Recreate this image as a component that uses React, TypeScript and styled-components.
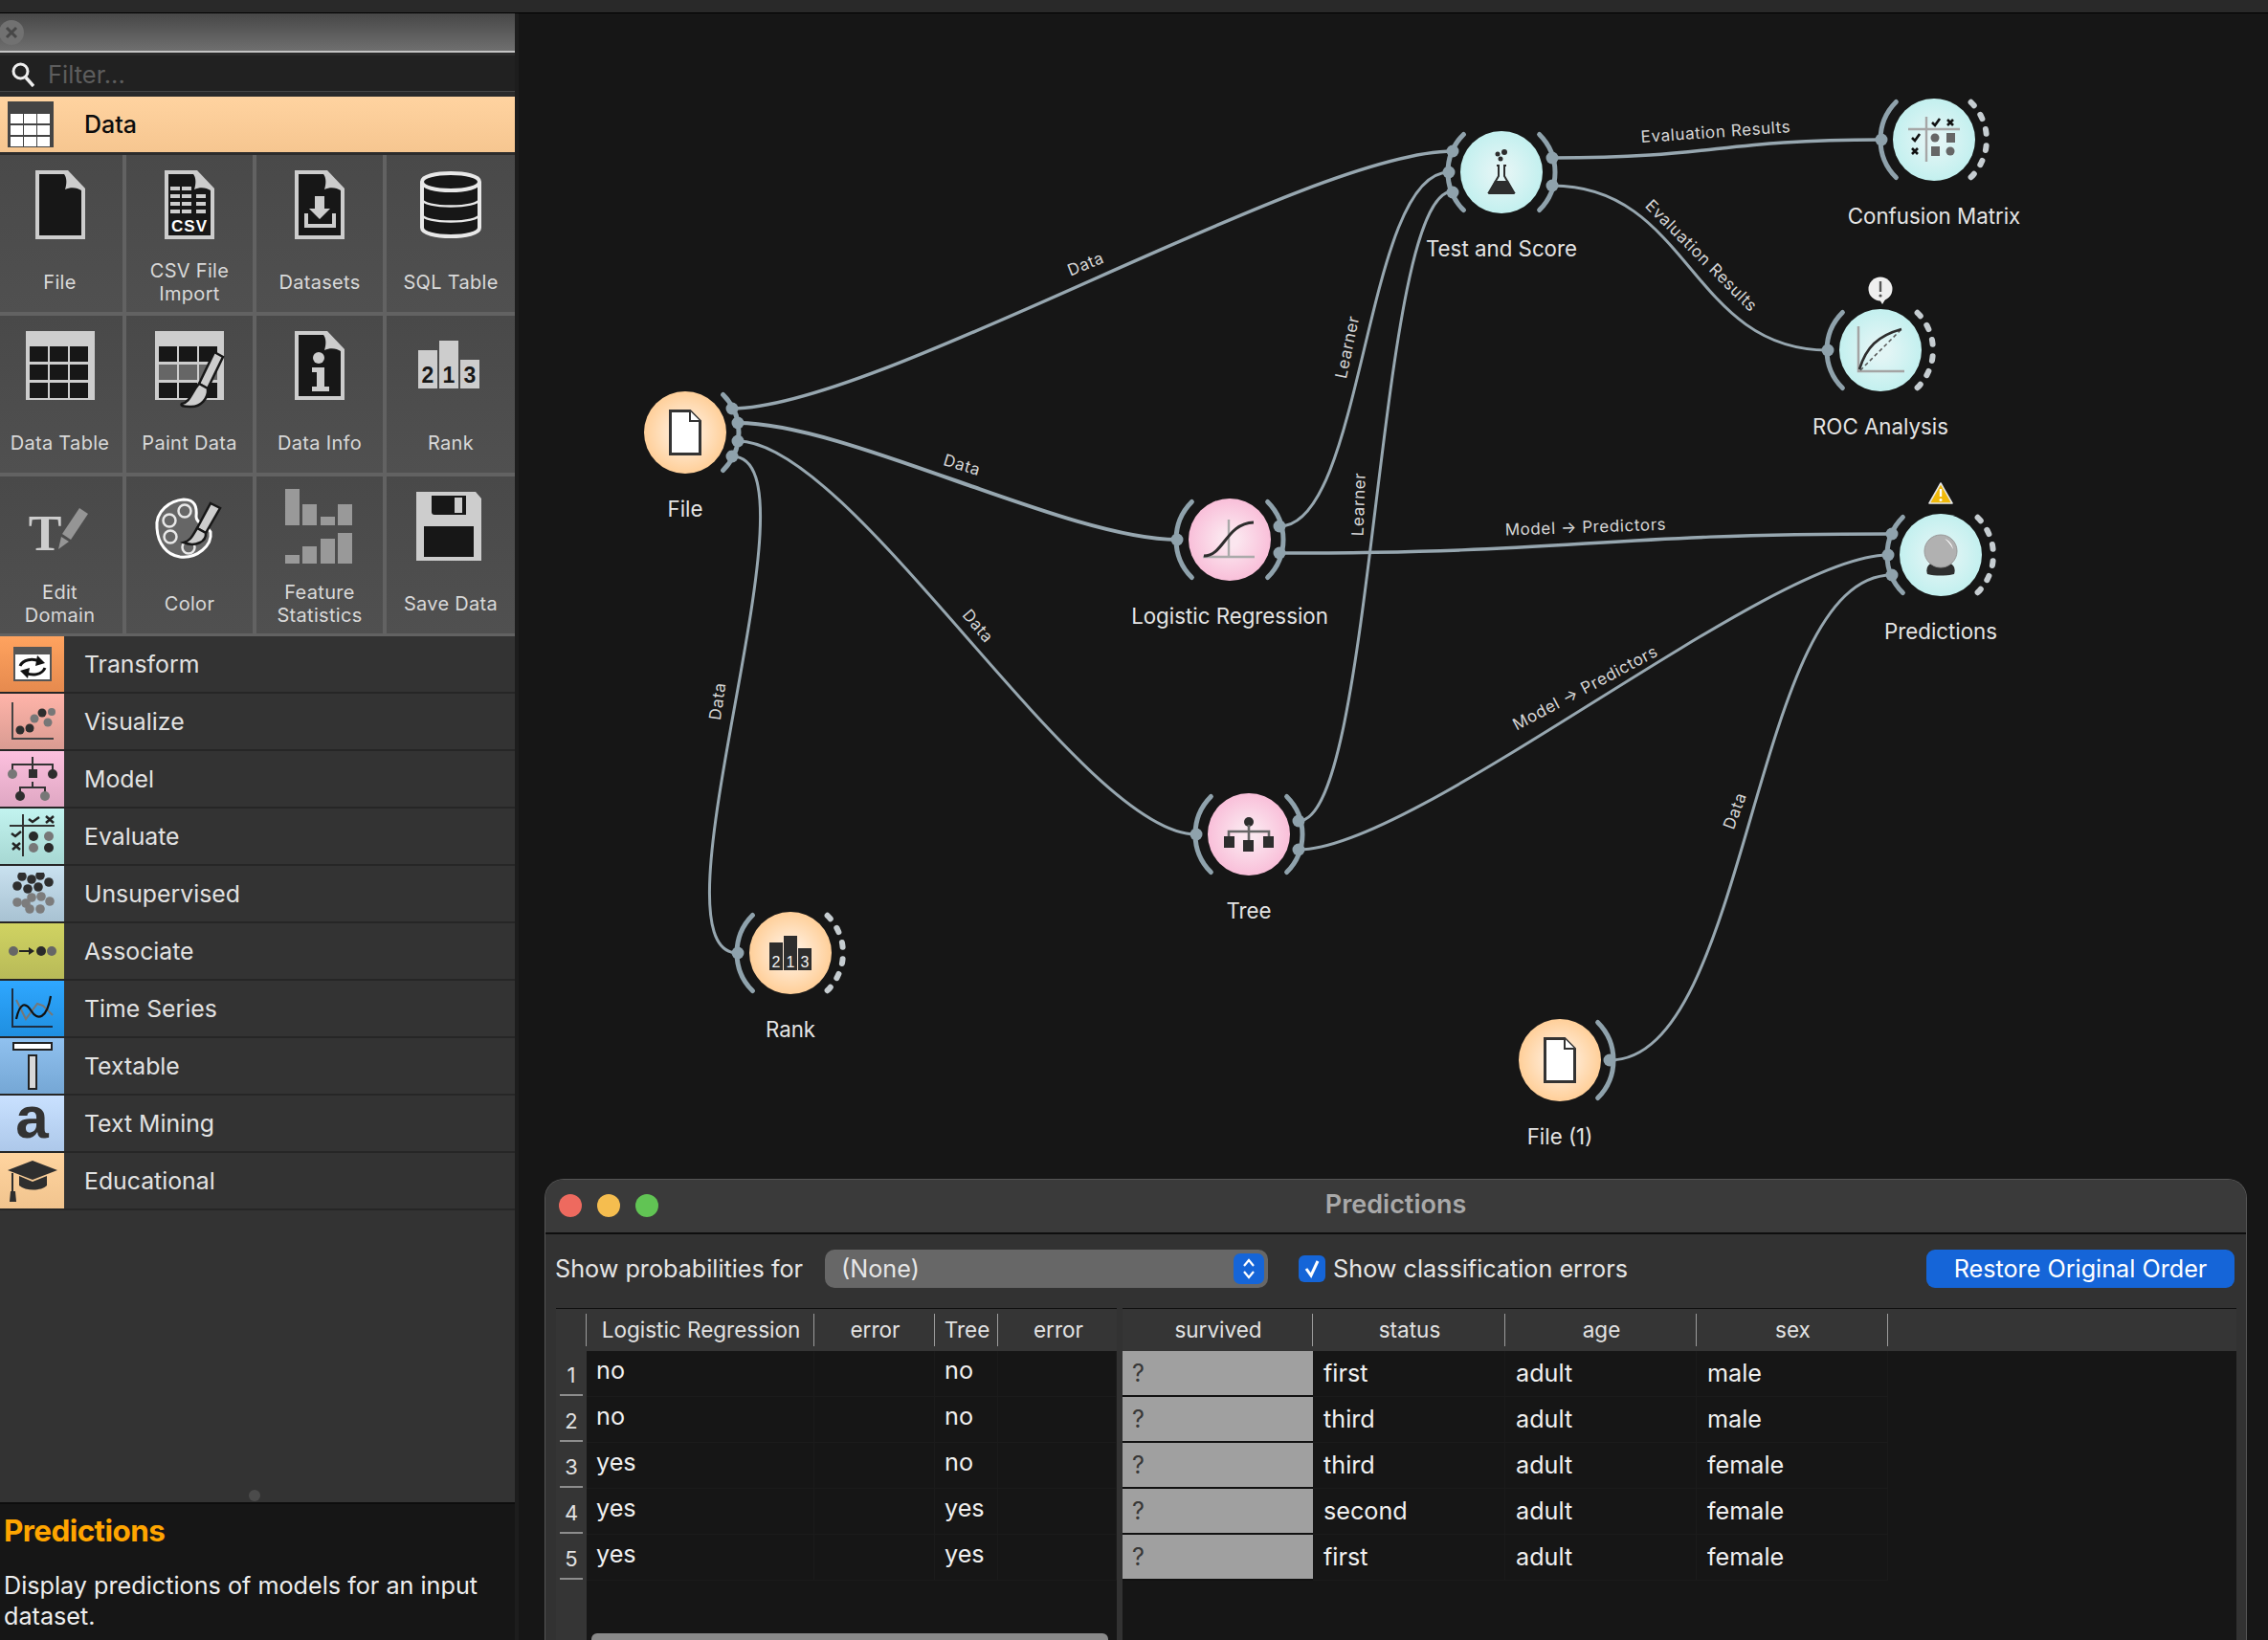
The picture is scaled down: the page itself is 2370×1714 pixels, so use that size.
import React from "react";
import styled, { createGlobalStyle } from "styled-components";

const GlobalStyle = createGlobalStyle`
  html, body { margin: 0; padding: 0; background: #161616; }
  body { font-family: Inter, "Liberation Sans", sans-serif; }
`;

const Page = styled.div`
  position: relative;
  width: 2370px;
  height: 1714px;
  overflow: hidden;
  background: #161616;
  display: flex;
  flex-direction: column;
`;

const TopBar = styled.div`
  height: 13px;
  flex: none;
  background: #292929;
  border-bottom: 1px solid #000;
`;

const Main = styled.div`
  flex: 1;
  display: flex;
  min-height: 0;
`;

const Sidebar = styled.aside`
  width: 538px;
  flex: none;
  display: flex;
  flex-direction: column;
  background: #333;
`;

const Gutter = styled.div`
  width: 4px;
  background: #1d1d1d;
`;

const DockTitle = styled.div`
  height: 39px;
  flex: none;
  display: flex;
  align-items: center;
  background: linear-gradient(#474747, #6f6f6f);
  border-bottom: 2px solid #c4c4c4;
`;

const SearchStrip = styled.div`
  height: 46px;
  flex: none;
  box-sizing: border-box;
  padding: 3px 0 5px;
  background: #2a2a2a;
`;

const SearchBox = styled.div`
  height: 38px;
  box-sizing: border-box;
  display: flex;
  align-items: center;
  gap: 14px;
  padding: 2px 0 0 12px;
  background: #212121;
  border-bottom: 1px solid #474747;
  color: #5d5d5d;
  font-size: 25.5px;
`;

const DataHeader = styled.div`
  height: 58px;
  flex: none;
  display: flex;
  align-items: center;
  gap: 32px;
  padding-left: 8px;
  background: linear-gradient(#ffd3a0, #f6c690);
  border-bottom: 3px solid #2c2c2c;
  color: #0c0c0c;
  font-size: 25px;
  font-weight: 500;
`;

const ToolGrid = styled.div`
  flex: none;
  display: grid;
  grid-template-columns: 128px 132px 132px 134px;
  grid-auto-rows: 164px;
  gap: 4px;
  padding-bottom: 3px;
  background: #626262;
`;

const ToolCell = styled.div`
  display: flex;
  flex-direction: column;
  align-items: center;
  padding-top: 16px;
  box-sizing: border-box;
  background: linear-gradient(#494949, #505050);

  &:nth-child(4n + 1) {
    padding-right: 3px;
  }
`;

const ToolLabel = styled.div`
  height: 48px;
  max-width: 110px;
  margin-top: 21px;
  display: flex;
  align-items: center;
  text-align: center;
  color: #d9d9d9;
  font-size: 20px;
  line-height: 24px;
  letter-spacing: 0.3px;
`;

const CategoryRow = styled.div`
  height: 60px;
  flex: none;
  box-sizing: border-box;
  display: flex;
  align-items: center;
  gap: 21px;
  background: #333;
  border-bottom: 2px solid #262626;
  color: #e2e2e2;
  font-size: 24.8px;
`;

const CategoryBadge = styled.div<{ $top: string; $bottom: string }>`
  width: 67px;
  height: 100%;
  flex: none;
  display: flex;
  align-items: center;
  justify-content: center;
  background: linear-gradient(${(p) => p.$top}, ${(p) => p.$bottom});
`;

const MiningGlyph = styled.span`
  color: #333;
  font-family: "Liberation Sans", sans-serif;
  font-size: 62px;
  font-weight: 700;
  line-height: 58px;
  height: 58px;
  margin-top: -12px;
`;

const SidebarFill = styled.div`
  flex: 1;
  position: relative;
  border-bottom: 2px solid #0d0d0d;
`;

const SplitHandle = styled.div`
  position: absolute;
  left: 260px;
  bottom: 1px;
  width: 12px;
  height: 12px;
  border-radius: 50%;
  background: #4b4b4b;
`;

const DocPanel = styled.div`
  height: 142px;
  flex: none;
  box-sizing: border-box;
  padding: 10px 4px 0;
  background: #161616;
  color: #eee;
`;

const DocTitle = styled.div`
  color: #ffa500;
  font-size: 31.5px;
  font-weight: 700;
  line-height: 36px;
  letter-spacing: -0.6px;
`;

const DocText = styled.div`
  margin-top: 23px;
  font-size: 25.2px;
  line-height: 32px;
`;

const Canvas = styled.main`
  flex: 1;
  background: #161616;
`;

const GraphLayer = styled.svg`
  position: absolute;
  left: 0;
  top: 0;
`;

const LinkLabel = styled.text`
  fill: #d6d6d6;
  font-family: Inter, sans-serif;
  font-size: 17px;
  letter-spacing: 0.6px;
  text-anchor: middle;
  dominant-baseline: middle;
`;

const Node = styled.div<{ $x: number; $y: number }>`
  position: absolute;
  left: ${(p) => p.$x - 120}px;
  top: ${(p) => p.$y - 43}px;
  width: 240px;
  display: flex;
  flex-direction: column;
  align-items: center;
`;

const Disc = styled.div<{ $edge: string; $core: string }>`
  width: 86px;
  height: 86px;
  display: flex;
  align-items: center;
  justify-content: center;
  border-radius: 50%;
  background: radial-gradient(circle closest-side, ${(p) => p.$core} 20%, ${(p) => p.$edge} 100%);
`;

const NodeTitle = styled.div`
  margin-top: 22px;
  color: #e4e4e4;
  font-size: 22.3px;
  line-height: 30px;
  white-space: nowrap;
`;

const NodeBadge = styled.div<{ $x: number; $y: number }>`
  position: absolute;
  left: ${(p) => p.$x}px;
  top: ${(p) => p.$y}px;
  line-height: 0;
`;

const Window = styled.section`
  position: absolute;
  left: 569px;
  top: 1232px;
  width: 1779px;
  height: 482px;
  box-sizing: border-box;
  display: flex;
  flex-direction: column;
  background: #323232;
  border: 1px solid #555;
  border-bottom: 0;
  border-radius: 20px 20px 0 0;
`;

const WindowBar = styled.header`
  position: relative;
  height: 51px;
  flex: none;
  box-sizing: content-box;
  display: flex;
  align-items: center;
  justify-content: center;
  padding-bottom: 4px;
  border-bottom: 2px solid #0e0e0e;
  border-radius: 19px 19px 0 0;
  background: #3a3a3a;
  color: #a9a9a9;
  font-size: 27px;
  font-weight: 600;
  margin-bottom: -2px;
`;

const Lights = styled.div`
  position: absolute;
  left: 14px;
  top: 15px;
  display: flex;
  gap: 16px;
`;

const Light = styled.span<{ $color: string }>`
  width: 24px;
  height: 24px;
  border-radius: 50%;
  background: ${(p) => p.$color};
`;

const Toolbar = styled.div`
  height: 79px;
  flex: none;
  box-sizing: border-box;
  display: flex;
  align-items: center;
  padding: 0 12px 3px 10px;
  color: #e6e6e6;
  font-size: 25.2px;
`;

const SelectBox = styled.div`
  width: 463px;
  height: 40px;
  box-sizing: border-box;
  margin-left: 23px;
  padding: 0 4px 0 17px;
  display: flex;
  align-items: center;
  justify-content: space-between;
  border-radius: 10px;
  background: #676767;
`;

const Stepper = styled.div`
  width: 32px;
  height: 32px;
  display: flex;
  align-items: center;
  justify-content: center;
  border-radius: 7px;
  background: #1565d8;
`;

const CheckBox = styled.div`
  width: 28px;
  height: 28px;
  margin: 0 8px 0 32px;
  display: flex;
  align-items: center;
  justify-content: center;
  border-radius: 6px;
  background: #1565d8;
`;

const RestoreButton = styled.button`
  width: 322px;
  height: 40px;
  margin-left: auto;
  border: 0;
  border-radius: 9px;
  background: #1565d8;
  color: #fff;
  font: inherit;
`;

const Tables = styled.div`
  flex: 1;
  min-height: 0;
  display: flex;
  gap: 6px;
  padding-left: 11px;
`;

const TableFrame = styled.div<{ $width: number }>`
  position: relative;
  width: ${(p) => p.$width}px;
  flex: none;
  background: #161616;
  border-top: 1px solid #0e0e0e;
`;

const TableGrid = styled.div<{ $columns: string }>`
  display: grid;
  grid-template-columns: ${(p) => p.$columns};
  grid-auto-rows: 48px;
`;

const HeaderRow = styled(TableGrid)`
  height: 44px;
  grid-auto-rows: 44px;
  background: #353535;
`;

const HeaderCell = styled.div<{ $plain?: boolean }>`
  height: 34px;
  margin-top: 5px;
  box-sizing: border-box;
  padding: 0 0 2px 2px;
  display: flex;
  align-items: center;
  justify-content: center;
  border-right: ${(p) => (p.$plain ? "0" : "1px solid #9b9b9b")};
  color: #e2e2e2;
  font-size: 22.5px;
  white-space: nowrap;
`;

const RowHeader = styled.div`
  display: flex;
  align-items: center;
  justify-content: center;
  position: relative;
  background: #353535;
  color: #e2e2e2;
  font-size: 22px;
  padding-top: 1px;
  box-sizing: border-box;

  &::after {
    content: "";
    position: absolute;
    left: 4px;
    right: 4px;
    bottom: 1px;
    height: 2px;
    background: #8d8d8d;
  }
`;

const RowHeaderFill = styled.div`
  position: absolute;
  left: 0;
  top: 284px;
  bottom: 0;
  width: 32px;
  background: #353535;
`;

const BodyCell = styled.div<{ $raised?: boolean }>`
  display: flex;
  align-items: ${(p) => (p.$raised ? "flex-start" : "center")};
  padding-left: ${(p) => (p.$raised ? 10 : 11)}px;
  padding-top: ${(p) => (p.$raised ? 5 : 0)}px;
  padding-bottom: ${(p) => (p.$raised ? 0 : 1)}px;
  box-sizing: border-box;
  border-right: 1px solid #1b1b1b;
  border-bottom: 1px solid #1b1b1b;
  color: #f0f0f0;
  font-size: 25.2px;
`;

const UnknownCell = styled.div`
  display: flex;
  align-items: center;
  padding-left: 10px;
  box-sizing: border-box;
  border-bottom: 2px solid #111;
  background: #a0a0a0;
  color: #383838;
  font-size: 25.2px;
`;

const ScrollThumb = styled.div`
  position: absolute;
  left: 37px;
  right: 9px;
  bottom: 0;
  height: 7px;
  border-radius: 6px 6px 0 0;
  background: #8a8a8a;
`;

const LIGHT = "#cdcdcd";
const DARK = "#171717";
const INK = "#2d2d2d";

function DocShape({ children }: { children?: React.ReactNode }) {
  return (
    <svg width="72" height="72" viewBox="0 0 72 72">
      <g transform="translate(10 0)">
        <path d="M0 0H34L52 19V72H0Z" fill={LIGHT} />
        <path d="M4 4H30C33 8 33 14 31 20C37 17 44 18 48 21V68H4Z" fill={DARK} />
        {children}
      </g>
    </svg>
  );
}

function CsvIcon() {
  const rows = [17, 25, 33, 41];
  return (
    <DocShape>
      {rows.map((y, r) =>
        [6, 18, 33].slice(0, r === 0 ? 2 : 3).map((x) => (
          <rect key={`${x}-${y}`} x={x} y={y} width="10" height="4" fill={LIGHT} />
        ))
      )}
      <text x="26" y="64" textAnchor="middle" fill="#fff" fontFamily="Liberation Sans" fontWeight="700" fontSize="17" letterSpacing="1">
        CSV
      </text>
    </DocShape>
  );
}

function DatasetsIcon() {
  return (
    <DocShape>
      <path d="M21 27H31V40H37L26 51L15 40H21Z" fill={LIGHT} />
      <path d="M12 45V58H41V45" fill="none" stroke={LIGHT} strokeWidth="4" />
    </DocShape>
  );
}

function InfoIcon() {
  return (
    <DocShape>
      <circle cx="25" cy="28" r="6" fill={LIGHT} />
      <path d="M18 38H31V58H36V63H18V58H23V43H18Z" fill={LIGHT} />
    </DocShape>
  );
}

function SqlIcon() {
  return (
    <svg width="72" height="72" viewBox="0 0 72 72">
      <path d="M6 12C6 0 66 0 66 12V60C66 72 6 72 6 60Z" fill={DARK} stroke="#e8e8e8" strokeWidth="4" />
      <path d="M6 12C6 24 66 24 66 12" fill="none" stroke="#e8e8e8" strokeWidth="4" />
      <path d="M6 30C6 40 66 40 66 30" fill="none" stroke="#e8e8e8" strokeWidth="2.5" />
      <path d="M6 46C6 56 66 56 66 46" fill="none" stroke="#e8e8e8" strokeWidth="2.5" />
    </svg>
  );
}

function TableShape({ middle }: { middle: string }) {
  const cols = [4, 25, 46];
  const rows = [16, 35, 54];
  return (
    <>
      <rect width="72" height="72" fill={LIGHT} />
      {rows.map((y, r) =>
        cols.map((x) => (
          <rect key={`${x}-${y}`} x={x} y={y} width="19" height="16" fill={r === 1 ? middle : DARK} />
        ))
      )}
    </>
  );
}

function DataTableIcon() {
  return (
    <svg width="72" height="72" viewBox="0 0 72 72">
      <TableShape middle={DARK} />
    </svg>
  );
}

function PaintIcon() {
  return (
    <svg width="72" height="82" viewBox="0 0 72 82" style={{ marginBottom: -10, overflow: "visible" }}>
      <TableShape middle="#666" />
      <path d="M62 22L71 27L55 60L46 55Z" fill={LIGHT} stroke={DARK} strokeWidth="2.5" />
      <path d="M46 55L55 60C56 70 48 80 36 79C30 79 26 78 28 76C37 74 38 64 46 55Z" fill={LIGHT} stroke={DARK} strokeWidth="2.5" />
    </svg>
  );
}

function PodiumIcon() {
  return (
    <svg width="72" height="72" viewBox="0 0 72 72">
      <rect x="2" y="20" width="20" height="40" fill={LIGHT} />
      <rect x="24" y="10" width="20" height="50" fill={LIGHT} />
      <rect x="46" y="30" width="20" height="30" fill={LIGHT} />
      <g fontFamily="Liberation Sans" fontWeight="700" fontSize="23" fill={DARK} textAnchor="middle">
        <text x="12" y="54">2</text>
        <text x="34" y="54">1</text>
        <text x="56" y="54">3</text>
      </g>
    </svg>
  );
}

function EditDomainIcon() {
  return (
    <svg width="72" height="72" viewBox="0 0 72 72">
      <text x="20" y="61" textAnchor="middle" fill={LIGHT} fontFamily="Liberation Serif" fontWeight="700" fontSize="52">
        T
      </text>
      <path d="M56 17L65 23L47 50L38 44Z" fill="#959595" />
      <path d="M37 47L45 52L34 60Z" fill="#959595" />
    </svg>
  );
}

function PaletteIcon() {
  return (
    <svg width="76" height="72" viewBox="0 0 76 72">
      <path d="M4 38C2 20 18 9 32 8C44 8 46 16 45 26C45 34 56 34 60 42C62 56 46 70 28 68C14 66 5 54 4 38Z" fill="#666" stroke="#fff" strokeWidth="3" />
      <g fill="none" stroke="#e8e8e8" strokeWidth="2.5">
        <circle cx="33" cy="20" r="6.5" />
        <circle cx="17" cy="30" r="6.5" />
        <circle cx="18" cy="47" r="6.5" />
        <circle cx="37" cy="58" r="6.5" />
      </g>
      <path d="M60 12L70 17L55 43L46 38Z" fill={LIGHT} stroke={DARK} strokeWidth="2.5" />
      <path d="M46 38L55 43C56 52 44 58 32 53C40 51 42 44 46 38Z" fill={LIGHT} stroke={DARK} strokeWidth="2.5" />
    </svg>
  );
}

function FeatureStatsIcon() {
  return (
    <svg width="72" height="80" viewBox="0 0 72 80" style={{ marginTop: -3, marginBottom: -5 }}>
      <g fill="#999">
        <rect x="0" y="0" width="15" height="38" />
        <rect x="18" y="16" width="15" height="22" />
        <rect x="37" y="29" width="15" height="9" />
        <rect x="55" y="16" width="15" height="22" />
        <rect x="0" y="69" width="15" height="9" />
        <rect x="18" y="60" width="15" height="18" />
        <rect x="37" y="52" width="15" height="26" />
        <rect x="55" y="46" width="15" height="32" />
      </g>
    </svg>
  );
}

function SaveIcon() {
  return (
    <svg width="72" height="72" viewBox="0 0 72 72">
      <path d="M0 0H62L68 7V72H0Z" fill={LIGHT} />
      <path d="M16 4H52V24H19Q16 24 16 21Z" fill={DARK} />
      <rect x="40" y="6" width="8" height="16" fill={LIGHT} />
      <rect x="8" y="36" width="52" height="32" fill={DARK} />
    </svg>
  );
}

function BadgeTable() {
  const xs = [3, 17, 31];
  const ys = [13, 25, 37];
  return (
    <svg width="48" height="48" viewBox="0 0 48 48">
      <rect width="48" height="48" fill="#444" />
      {ys.map((y) =>
        xs.map((x) => <rect key={`${x}-${y}`} x={x} y={y} width="13" height="10" fill="#fff" />)
      )}
    </svg>
  );
}

function BadgeTransform() {
  return (
    <svg width="40" height="36" viewBox="0 0 40 36">
      <rect width="40" height="36" fill="#555" />
      <rect x="2" y="8" width="36" height="26" fill="#fff" />
      <g fill="none" stroke="#111" strokeWidth="3">
        <path d="M7 20C10 13 20 12 27 15" />
        <path d="M33 22C30 29 20 31 13 27" />
      </g>
      <path d="M25 9L33 17L23 20Z" fill="#111" />
      <path d="M15 33L7 25L17 22Z" fill="#111" />
    </svg>
  );
}

function BadgeVisualize() {
  return (
    <svg width="48" height="44" viewBox="0 0 48 44">
      <path d="M3 2V40H46" fill="none" stroke="#444" strokeWidth="2" />
      <g fill="#2e2e2e">
        <circle cx="34" cy="13" r="4.5" />
        <circle cx="21" cy="29" r="4.5" />
        <circle cx="11" cy="31" r="4.5" />
      </g>
      <g fill="#777">
        <circle cx="44" cy="12" r="4" />
        <circle cx="26" cy="19" r="4.5" />
        <circle cx="40" cy="23" r="4.5" />
      </g>
    </svg>
  );
}

function BadgeModel() {
  return (
    <svg width="54" height="46" viewBox="0 0 54 46">
      <g fill="none" stroke="#333" strokeWidth="2">
        <path d="M27 0V20M6 14V8H48V14M27 26V32M14 38V32H40V38" />
      </g>
      <rect x="23" y="13" width="9" height="9" fill="#2e2e2e" />
      <circle cx="6" cy="18" r="5" fill="#777" />
      <circle cx="48" cy="18" r="5" fill="#2e2e2e" />
      <circle cx="14" cy="41" r="5" fill="#2e2e2e" />
      <circle cx="40" cy="41" r="5" fill="#777" />
    </svg>
  );
}

function BadgeEvaluate() {
  return (
    <svg width="50" height="46" viewBox="0 0 50 46">
      <path d="M15 0V44M1 12H48" fill="none" stroke="#333" strokeWidth="2" />
      <path d="M21 5L25 8L32 3M3 20L7 23L13 18" fill="none" stroke="#222" strokeWidth="2.5" />
      <path d="M39 2L47 9M47 2L39 9M4 30L12 37M12 30L4 37" fill="none" stroke="#222" strokeWidth="2.5" />
      <circle cx="26" cy="23" r="5" fill="#2a2a2a" />
      <circle cx="42" cy="23" r="5" fill="#777" />
      <circle cx="26" cy="35" r="5" fill="#777" />
      <circle cx="42" cy="35" r="5" fill="#2a2a2a" />
    </svg>
  );
}

function BadgeUnsupervised() {
  const dark = [[14, 4], [24, 7], [33, 3], [42, 10], [9, 14], [20, 17], [31, 15]];
  const grey = [[24, 26], [34, 25], [9, 31], [18, 32], [43, 30], [22, 38], [33, 38]];
  return (
    <svg width="50" height="44" viewBox="0 0 50 44">
      {grey.map(([x, y]) => (
        <circle key={`${x}-${y}`} cx={x} cy={y} r="4.8" fill="#7c7c7c" />
      ))}
      {dark.map(([x, y]) => (
        <circle key={`${x}-${y}`} cx={x} cy={y} r="4.8" fill="#2e2e2e" />
      ))}
    </svg>
  );
}

function BadgeAssociate() {
  return (
    <svg width="50" height="14" viewBox="0 0 50 14">
      <circle cx="5" cy="7" r="5" fill="#666" />
      <path d="M11 7H22" stroke="#222" strokeWidth="2" />
      <path d="M21 3L27 7L21 11Z" fill="#222" />
      <circle cx="34" cy="7" r="5" fill="#2a2a2a" />
      <circle cx="45" cy="7" r="5" fill="#666" />
    </svg>
  );
}

function BadgeTimeSeries() {
  return (
    <svg width="46" height="42" viewBox="0 0 46 42">
      <path d="M2 0V40H44" fill="none" stroke="#1d2f44" strokeWidth="2" />
      <path d="M6 12L16 32L28 16L34 18L44 28" fill="none" stroke="#777" strokeWidth="2" />
      <path d="M6 32C10 14 16 14 22 24C28 34 38 32 42 8" fill="none" stroke="#111" strokeWidth="2.2" />
    </svg>
  );
}

function BadgeTextable() {
  return (
    <svg width="42" height="50" viewBox="0 0 42 50">
      <rect x="1" y="1" width="40" height="7" fill="#fff" stroke="#222" strokeWidth="2" />
      <rect x="17" y="14" width="8" height="35" fill="#d8d8d8" stroke="#222" strokeWidth="2" />
    </svg>
  );
}

function BadgeEducational() {
  return (
    <svg width="54" height="46" viewBox="0 0 54 46">
      <path d="M27 2L53 12L27 22L1 12Z" fill="#2e2e2e" />
      <path d="M13 18V28C20 34 36 34 42 28V18L27 24Z" fill="#2e2e2e" />
      <path d="M6 15V34" stroke="#2e2e2e" strokeWidth="2" />
      <path d="M4 34H9L10 45H3Z" fill="#2e2e2e" />
    </svg>
  );
}

function NodeFile() {
  return (
    <svg width="34" height="48" viewBox="0 0 34 48">
      <path d="M1.5 1.5H22L32.5 12V46.5H1.5Z" fill="#fff" stroke="#333" strokeWidth="3" />
      <path d="M22 1.5V12H32.5" fill="#fff" stroke="#333" strokeWidth="2" />
    </svg>
  );
}

function NodeFlask() {
  return (
    <svg width="30" height="48" viewBox="0 0 30 48">
      <path d="M10 17H12V28L2 45H28L18 28V17H20" fill="none" stroke="#2d2d2d" strokeWidth="2" />
      <path d="M8 33H22L29 47H1Z" fill="#2d2d2d" />
      <circle cx="14" cy="10" r="2.5" fill="#2d2d2d" />
      <circle cx="18" cy="3" r="3" fill="#2d2d2d" />
      <circle cx="11" cy="5" r="2.5" fill="#2d2d2d" />
    </svg>
  );
}

function NodeMatrix() {
  return (
    <svg width="56" height="48" viewBox="0 0 56 48">
      <path d="M20 0V47M1 13H55" fill="none" stroke="#a6a6a6" strokeWidth="2.4" />
      <path d="M26 6L29 9L34 2M5 22L8 25L13 18" fill="none" stroke="#111" strokeWidth="2.6" />
      <path d="M42 3L48 9M48 3L42 9M5 33L11 39M11 33L5 39" fill="none" stroke="#111" strokeWidth="2.6" />
      <circle cx="29" cy="22" r="4.5" fill="#666" />
      <rect x="41" y="17" width="9" height="10" fill="#666" />
      <rect x="25" y="31" width="9" height="10" fill="#666" />
      <circle cx="45" cy="36" r="4.5" fill="#666" />
    </svg>
  );
}

function NodeRoc() {
  return (
    <svg width="50" height="50" viewBox="0 0 50 50">
      <path d="M2 0V47H50" fill="none" stroke="#a4a4a4" strokeWidth="2.5" />
      <path d="M4 46L46 4" fill="none" stroke="#555" strokeWidth="1.5" strokeDasharray="4 3" />
      <path d="M3 45C10 22 22 10 47 3" fill="none" stroke="#2d2d2d" strokeWidth="2.6" />
    </svg>
  );
}

function NodeSigmoid() {
  return (
    <svg width="56" height="42" viewBox="0 0 56 42">
      <path d="M0 39H54M27 0V39" fill="none" stroke="#aaa" strokeWidth="2.4" />
      <path d="M1 38C22 38 24 4 53 3" fill="none" stroke="#2d2d2d" strokeWidth="3" />
    </svg>
  );
}

function NodeTree() {
  return (
    <svg width="52" height="36" viewBox="0 0 52 36">
      <circle cx="26" cy="5" r="5" fill={INK} />
      <path d="M26 8V24M5 21V15H47V21" fill="none" stroke="#666" strokeWidth="2.6" />
      <rect x="0" y="20" width="11" height="12" fill={INK} />
      <rect x="20" y="24" width="11" height="12" fill={INK} />
      <rect x="41" y="20" width="11" height="12" fill={INK} />
    </svg>
  );
}

function NodeBall() {
  return (
    <svg width="36" height="44" viewBox="0 0 36 44">
      <path d="M4 42C2 36 5 32 9 30H27C31 32 34 36 32 42C24 44 12 44 4 42Z" fill="#2e2e2e" />
      <circle cx="18" cy="18" r="17" fill="#b1b1b1" stroke="#999" strokeWidth="1" />
      <path d="M22 5C27 7 30 11 31 16C28 11 26 8 22 5Z" fill="#fff" />
    </svg>
  );
}

function NodePodium() {
  return (
    <svg width="44" height="36" viewBox="0 0 44 36">
      <rect x="0" y="7" width="14" height="29" fill={INK} />
      <rect x="15" y="0" width="14" height="36" fill={INK} />
      <rect x="30" y="13" width="14" height="23" fill={INK} />
      <g fontFamily="Liberation Sans" fontSize="16" fill="#f2f2f2" textAnchor="middle">
        <text x="7" y="33">2</text>
        <text x="22" y="33">1</text>
        <text x="37" y="33">3</text>
      </g>
    </svg>
  );
}

const tones = {
  data: { edge: "#ffcf99", core: "#ffeedc" },
  evaluate: { edge: "#c3f0ef", core: "#e2f5f5" },
  model: { edge: "#f9bfd9", core: "#fbe6ef" },
};

const nodes = [
  { title: "File", x: 716, y: 452, tone: tones.data, icon: <NodeFile /> },
  { title: "Test and Score", x: 1569, y: 180, tone: tones.evaluate, icon: <NodeFlask /> },
  { title: "Confusion Matrix", x: 2021, y: 146, tone: tones.evaluate, icon: <NodeMatrix /> },
  { title: "ROC Analysis", x: 1965, y: 366, tone: tones.evaluate, icon: <NodeRoc /> },
  { title: "Logistic Regression", x: 1285, y: 564, tone: tones.model, icon: <NodeSigmoid /> },
  { title: "Predictions", x: 2028, y: 580, tone: tones.evaluate, icon: <NodeBall /> },
  { title: "Tree", x: 1305, y: 872, tone: tones.model, icon: <NodeTree /> },
  { title: "Rank", x: 826, y: 996, tone: tones.data, icon: <NodePodium /> },
  { title: "File (1)", x: 1630, y: 1108, tone: tones.data, icon: <NodeFile /> },
];

const curve = (x1: number, y1: number, x2: number, y2: number, k = 0.5) => {
  const d = Math.abs(x2 - x1) * k;
  return `M${x1} ${y1}C${x1 + d} ${y1} ${x2 - d} ${y2} ${x2} ${y2}`;
};

const links = [
  { d: curve(765, 427, 1518, 158, 0.2), w: 3.5 },
  { d: curve(771, 442, 1230, 564, 0.25), w: 4 },
  { d: curve(771, 461, 1250, 872, 0.25), w: 3 },
  { d: "M765 477C865 477 671 996 771 996", w: 3 },
  { d: curve(1337, 550, 1514, 180, 0.5), w: 3 },
  { d: curve(1357, 858, 1518, 200, 0.5), w: 3 },
  { d: curve(1337, 578, 1977, 558, 0.5), w: 3.5 },
  { d: curve(1357, 888, 1973, 580, 0.2), w: 3 },
  { d: curve(1682, 1108, 1977, 601, 0.5), w: 3 },
  { d: curve(1622, 165, 1966, 146, 0.5), w: 3.5 },
  { d: curve(1622, 194, 1910, 366, 0.5), w: 3 },
];

const linkLabels = [
  { text: "Data", x: 1135, y: 277, r: -22 },
  { text: "Data", x: 1005, y: 487, r: 17 },
  { text: "Data", x: 1021, y: 655, r: 50 },
  { text: "Data", x: 751, y: 733, r: -82 },
  { text: "Learner", x: 1409, y: 363, r: -78 },
  { text: "Learner", x: 1421, y: 527, r: -88 },
  { text: "Evaluation Results", x: 1793, y: 139, r: -4 },
  { text: "Evaluation Results", x: 1777, y: 268, r: 45 },
  { text: "Model → Predictors", x: 1657, y: 552, r: -2 },
  { text: "Model → Predictors", x: 1657, y: 720, r: -28 },
  { text: "Data", x: 1814, y: 848, r: -70 },
];

const polar = (cx: number, cy: number, r: number, deg: number) => {
  const a = (deg * Math.PI) / 180;
  return `${(cx + r * Math.cos(a)).toFixed(1)} ${(cy + r * Math.sin(a)).toFixed(1)}`;
};

const arc = (cx: number, cy: number, r: number, from: number, to: number) =>
  `M${polar(cx, cy, r, from)}A${r} ${r} 0 0 1 ${polar(cx, cy, r, to)}`;

const channelArcs = [
  [716, 452, "right"],
  [1569, 180, "left"],
  [1569, 180, "right"],
  [2021, 146, "left"],
  [1965, 366, "left"],
  [1285, 564, "left"],
  [1285, 564, "right"],
  [1305, 872, "left"],
  [1305, 872, "right"],
  [2028, 580, "left"],
  [826, 996, "left"],
  [1630, 1108, "right"],
] as const;

const dottedOutputs = [
  [2021, 146],
  [1965, 366],
  [2028, 580],
  [826, 996],
];

const anchors = [
  [765, 427], [771, 442], [771, 461], [765, 477],
  [1518, 158], [1514, 180], [1518, 201], [1622, 165], [1622, 194],
  [1966, 146], [1910, 366], [1230, 564], [1337, 550], [1337, 578],
  [1250, 872], [1357, 858], [1357, 888], [1977, 558], [1973, 580], [1977, 601],
  [771, 996], [1682, 1108],
];

function Graph() {
  return (
    <GraphLayer width="2370" height="1714" viewBox="0 0 2370 1714">
      {links.map((l) => (
        <path key={l.d} d={l.d} fill="none" stroke="#97a7b0" strokeWidth={l.w} />
      ))}
      {channelArcs.map(([x, y, side]) => (
        <path
          key={`${x}-${side}`}
          d={side === "left" ? arc(x, y, 56, 135, 225) : arc(x, y, 56, -45, 45)}
          fill="none"
          stroke="#8fa2ac"
          strokeWidth="5"
          strokeLinecap="round"
        />
      ))}
      {dottedOutputs.map(([x, y]) =>
        [-43, -26, -9, 9, 26, 43].map((a) => (
          <path
            key={`${x}-${a}`}
            d={arc(x, y, 55, a - 2.5, a + 2.5)}
            fill="none"
            stroke="#c6cdd1"
            strokeWidth="6"
            strokeLinecap="round"
          />
        ))
      )}
      {anchors.map(([x, y]) => (
        <circle key={`${x}-${y}`} cx={x} cy={y} r="6.5" fill="#8fa2ac" />
      ))}
      {linkLabels.map((l) => (
        <LinkLabel key={`${l.x}-${l.y}`} x={l.x} y={l.y} transform={`rotate(${l.r} ${l.x} ${l.y})`}>
          {l.text}
        </LinkLabel>
      ))}
    </GraphLayer>
  );
}

const tools = [
  { label: "File", icon: <DocShape /> },
  { label: "CSV File Import", icon: <CsvIcon /> },
  { label: "Datasets", icon: <DatasetsIcon /> },
  { label: "SQL Table", icon: <SqlIcon /> },
  { label: "Data Table", icon: <DataTableIcon /> },
  { label: "Paint Data", icon: <PaintIcon /> },
  { label: "Data Info", icon: <InfoIcon /> },
  { label: "Rank", icon: <PodiumIcon /> },
  { label: "Edit Domain", icon: <EditDomainIcon /> },
  { label: "Color", icon: <PaletteIcon /> },
  { label: "Feature Statistics", icon: <FeatureStatsIcon /> },
  { label: "Save Data", icon: <SaveIcon /> },
];

const categories = [
  { label: "Transform", top: "#ffa35f", bottom: "#e68a4e", icon: <BadgeTransform /> },
  { label: "Visualize", top: "#ffb4a9", bottom: "#d99b92", icon: <BadgeVisualize /> },
  { label: "Model", top: "#fcc0de", bottom: "#dfa7c3", icon: <BadgeModel /> },
  { label: "Evaluate", top: "#c2f3ef", bottom: "#a7d8d3", icon: <BadgeEvaluate /> },
  { label: "Unsupervised", top: "#c9e1ef", bottom: "#a8c2d2", icon: <BadgeUnsupervised /> },
  { label: "Associate", top: "#d0d362", bottom: "#b8ba58", icon: <BadgeAssociate /> },
  { label: "Time Series", top: "#2fa7ff", bottom: "#1f8fe0", icon: <BadgeTimeSeries /> },
  { label: "Textable", top: "#90c1ef", bottom: "#75a7d5", icon: <BadgeTextable /> },
  { label: "Text Mining", top: "#c9e1ff", bottom: "#adc8ea", icon: <MiningGlyph>a</MiningGlyph> },
  { label: "Educational", top: "#ffd49f", bottom: "#f1c48e", icon: <BadgeEducational /> },
];

const predictions = [
  ["no", "no"],
  ["no", "no"],
  ["yes", "no"],
  ["yes", "yes"],
  ["yes", "yes"],
];

const passengers = [
  ["first", "adult", "male"],
  ["third", "adult", "male"],
  ["third", "adult", "female"],
  ["second", "adult", "female"],
  ["first", "adult", "female"],
];

const LEFT_COLUMNS = "32px 238px 126px 66px 124px";
const RIGHT_COLUMNS = "199px 201px 200px 200px 1fr";

export default function App() {
  return (
    <Page>
      <GlobalStyle />
      <TopBar />
      <Main>
        <Sidebar>
          <DockTitle>
            <svg width="26" height="26" viewBox="0 0 26 26">
              <circle cx="12" cy="13" r="13" fill="#717171" />
              <path d="M7 8L17 18M17 8L7 18" stroke="#474747" strokeWidth="3" />
            </svg>
          </DockTitle>
          <SearchStrip>
            <SearchBox>
              <svg width="24" height="26" viewBox="0 0 24 26">
                <circle cx="9.5" cy="9.5" r="7.5" fill="none" stroke="#eee" strokeWidth="3" />
                <path d="M15 16L23 25" stroke="#eee" strokeWidth="3.5" />
              </svg>
              Filter...
            </SearchBox>
          </SearchStrip>
          <DataHeader>
            <BadgeTable />
            Data
          </DataHeader>
          <ToolGrid>
            {tools.map((t) => (
              <ToolCell key={t.label}>
                {t.icon}
                <ToolLabel>{t.label}</ToolLabel>
              </ToolCell>
            ))}
          </ToolGrid>
          {categories.map((c) => (
            <CategoryRow key={c.label}>
              <CategoryBadge $top={c.top} $bottom={c.bottom}>
                {c.icon}
              </CategoryBadge>
              {c.label}
            </CategoryRow>
          ))}
          <SidebarFill>
            <SplitHandle />
          </SidebarFill>
          <DocPanel>
            <DocTitle>Predictions</DocTitle>
            <DocText>
              Display predictions of models for an input
              <br />
              dataset.
            </DocText>
          </DocPanel>
        </Sidebar>
        <Gutter />
        <Canvas />
      </Main>

      <Graph />
      {nodes.map((n) => (
        <Node key={n.title} $x={n.x} $y={n.y}>
          <Disc $edge={n.tone.edge} $core={n.tone.core}>
            {n.icon}
          </Disc>
          <NodeTitle>{n.title}</NodeTitle>
        </Node>
      ))}
      <NodeBadge $x={1952} $y={289}>
        <svg width="26" height="30" viewBox="0 0 26 30">
          <circle cx="13" cy="13" r="12.5" fill="#efefef" />
          <path d="M12 24L18 24L15 29Z" fill="#efefef" />
          <path d="M13 5V16" stroke="#555" strokeWidth="2.4" />
          <circle cx="13" cy="20" r="1.6" fill="#555" />
        </svg>
      </NodeBadge>
      <NodeBadge $x={2015} $y={503}>
        <svg width="26" height="25" viewBox="0 0 26 25">
          <path d="M13 2L25 23H1Z" fill="#f0b90b" stroke="#e6e6e6" strokeWidth="1.6" strokeLinejoin="round" />
          <path d="M13 8V16" stroke="#fff" strokeWidth="2.4" />
          <circle cx="13" cy="19.5" r="1.5" fill="#fff" />
        </svg>
      </NodeBadge>

      <Window>
        <WindowBar>
          <Lights>
            <Light $color="#ee6a5f" />
            <Light $color="#f5bd4f" />
            <Light $color="#61c454" />
          </Lights>
          Predictions
        </WindowBar>
        <Toolbar>
          Show probabilities for
          <SelectBox>
            (None)
            <Stepper>
              <svg width="14" height="24" viewBox="0 0 14 24">
                <path d="M2 9L7 3L12 9M2 15L7 21L12 15" fill="none" stroke="#fff" strokeWidth="2.2" />
              </svg>
            </Stepper>
          </SelectBox>
          <CheckBox>
            <svg width="18" height="20" viewBox="0 0 18 20">
              <path d="M3 10L8 17L15 2" fill="none" stroke="#fff" strokeWidth="3" />
            </svg>
          </CheckBox>
          Show classification errors
          <RestoreButton>Restore Original Order</RestoreButton>
        </Toolbar>
        <Tables>
          <TableFrame $width={586}>
            <HeaderRow $columns={LEFT_COLUMNS}>
              <HeaderCell />
              <HeaderCell>Logistic Regression</HeaderCell>
              <HeaderCell>error</HeaderCell>
              <HeaderCell>Tree</HeaderCell>
              <HeaderCell $plain>error</HeaderCell>
            </HeaderRow>
            <TableGrid $columns={LEFT_COLUMNS}>
              {predictions.map((row, i) => (
                <React.Fragment key={i}>
                  <RowHeader>{i + 1}</RowHeader>
                  <BodyCell $raised>{row[0]}</BodyCell>
                  <BodyCell />
                  <BodyCell $raised>{row[1]}</BodyCell>
                  <BodyCell />
                </React.Fragment>
              ))}
            </TableGrid>
            <RowHeaderFill />
            <ScrollThumb />
          </TableFrame>
          <TableFrame $width={1164}>
            <HeaderRow $columns={RIGHT_COLUMNS}>
              <HeaderCell>survived</HeaderCell>
              <HeaderCell>status</HeaderCell>
              <HeaderCell>age</HeaderCell>
              <HeaderCell>sex</HeaderCell>
              <HeaderCell $plain />
            </HeaderRow>
            <TableGrid $columns={RIGHT_COLUMNS}>
              {passengers.map((row, i) => (
                <React.Fragment key={i}>
                  <UnknownCell>?</UnknownCell>
                  {row.map((value, j) => (
                    <BodyCell key={j}>{value}</BodyCell>
                  ))}
                  <div />
                </React.Fragment>
              ))}
            </TableGrid>
          </TableFrame>
        </Tables>
      </Window>
    </Page>
  );
}
